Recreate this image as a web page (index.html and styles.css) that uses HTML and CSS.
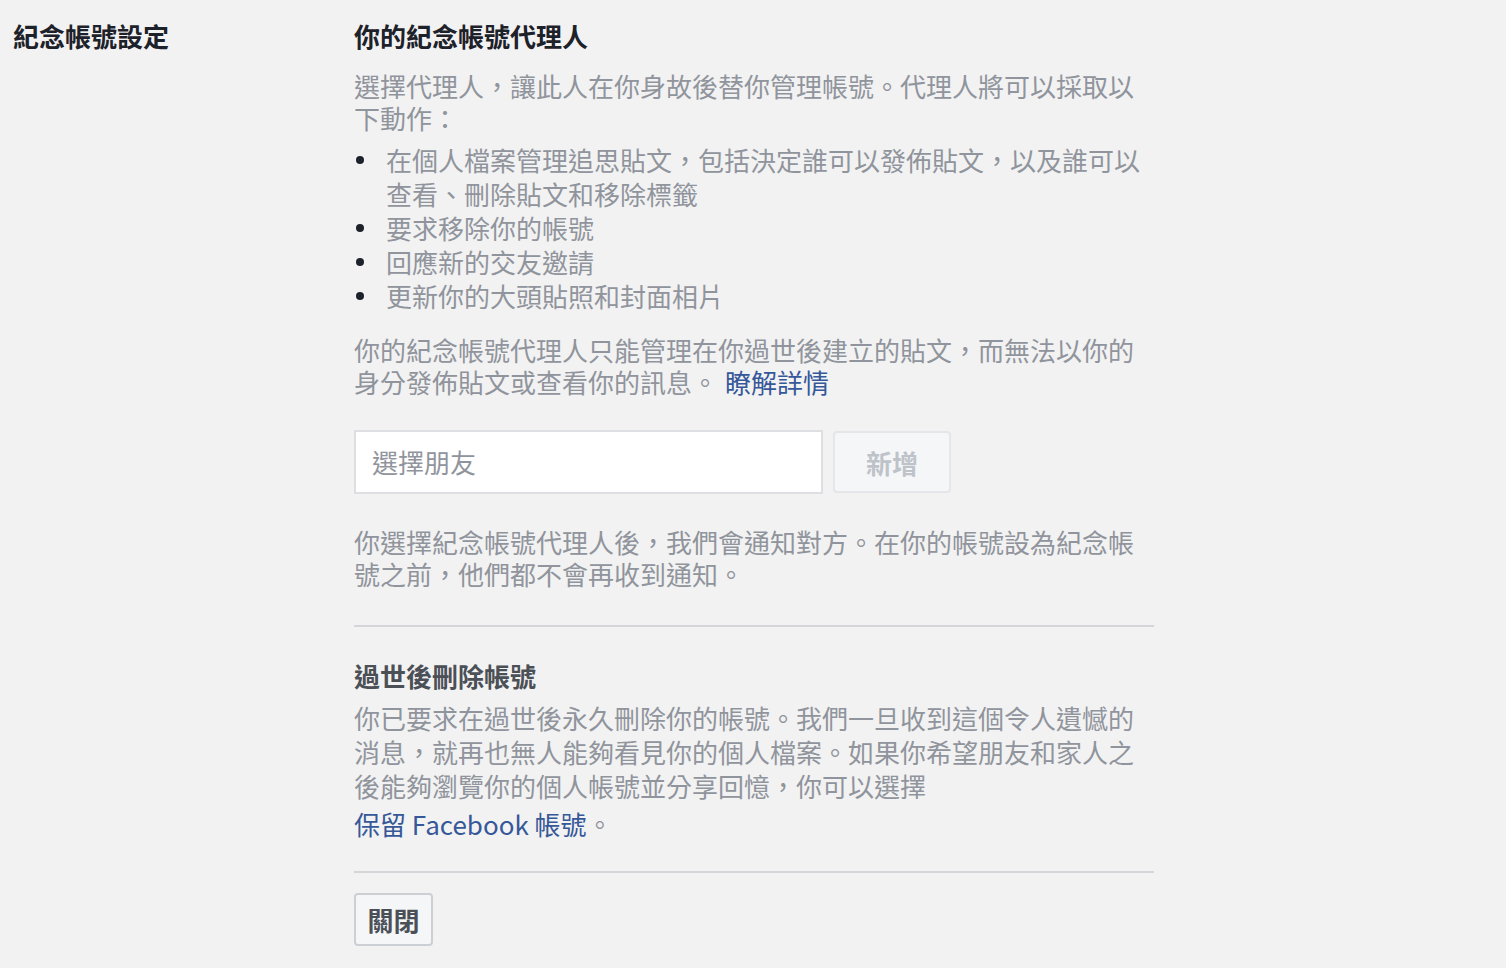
FILE: index.html
```html
<!DOCTYPE html>
<html lang="zh-Hant">
<head>
<meta charset="utf-8">
<title>紀念帳號設定</title>
<link rel="stylesheet" href="styles.css">
</head>
<body>
<div class="page">
  <div class="label-col">
    <h2 class="section-label">紀念帳號設定</h2>
  </div>
  <div class="content-col">
    <h3 class="heading">你的紀念帳號代理人</h3>
    <p class="text p-intro">選擇代理人，讓此人在你身故後替你管理帳號。代理人將可以採取以下動作：</p>
    <ul class="bullets">
      <li>在個人檔案管理追思貼文，包括決定誰可以發佈貼文，以及誰可以查看、刪除貼文和移除標籤</li>
      <li>要求移除你的帳號</li>
      <li>回應新的交友邀請</li>
      <li>更新你的大頭貼照和封面相片</li>
    </ul>
    <p class="text p-limit">你的紀念帳號代理人只能管理在你過世後建立的貼文，而無法以你的身分發佈貼文或查看你的訊息。<a class="link link-more" href="#">瞭解詳情</a></p>
    <div class="picker">
      <div class="friend-input">選擇朋友</div>
      <button class="btn btn-add" type="button">新增</button>
    </div>
    <p class="text p-notify">你選擇紀念帳號代理人後，我們會通知對方。在你的帳號設為紀念帳號之前，他們都不會再收到通知。</p>
    <hr class="divider divider-1">
    <h3 class="heading heading-2">過世後刪除帳號</h3>
    <p class="text p-delete">你已要求在過世後永久刪除你的帳號。我們一旦收到這個令人遺憾的消息，就再也無人能夠看見你的個人檔案。如果你希望朋友和家人之後能夠瀏覽你的個人帳號並分享回憶，你可以選擇</p>
    <div class="text keep-line"><a class="link" href="#">保留 Facebook 帳號</a>。</div>
    <hr class="divider divider-2">
    <button class="btn btn-close" type="button">關閉</button>
  </div>
</div>
</body>
</html>
```

FILE: styles.css
```css
html, body {
  margin: 0;
  padding: 0;
  background: #f2f2f2;
}
body {
  font-family: "Noto Sans CJK TC", "Noto Sans", "Liberation Sans", sans-serif;
  font-size: 26px;
  color: #90949c;
}
.page {
  display: flex;
  padding-top: 20px;
}
.label-col {
  width: 341px;
  padding-left: 13px;
  flex: none;
}
.section-label {
  margin: 0;
  font-size: 26px;
  line-height: 32px;
  font-weight: 700;
  color: #1d2129;
}
.content-col {
  width: 800px;
  flex: none;
}
.heading {
  margin: 0;
  font-size: 26px;
  line-height: 32px;
  font-weight: 700;
  color: #1d2129;
}
.heading-2 {
  color: #4b4f56;
  margin-top: 33px;
}
.text {
  margin: 0;
  line-height: 32px;
  color: #90949c;
}
.p-intro {
  margin-top: 18px;
}
.bullets {
  list-style: none;
  margin: 9px 0 0;
  padding: 0;
  line-height: 34px;
}
.bullets li {
  position: relative;
  padding-left: 32px;
}
.bullets li::before {
  content: "";
  position: absolute;
  left: 2px;
  top: 13px;
  width: 8px;
  height: 8px;
  border-radius: 50%;
  background: #1d2129;
}
.p-limit {
  margin-top: 21px;
}
.link {
  color: #365899;
  text-decoration: none;
}
.link-more {
  margin-left: 7px;
}
.picker {
  display: flex;
  gap: 10px;
  margin-top: 32px;
  align-items: center;
}
.friend-input {
  box-sizing: border-box;
  width: 469px;
  height: 64px;
  border: 2px solid #dddfe2;
  background: #ffffff;
  padding-left: 16px;
  line-height: 60px;
  color: #90949c;
}
.btn {
  font-family: "Noto Sans CJK TC", "Noto Sans", "Liberation Sans", sans-serif;
  font-size: 26px;
  font-weight: 700;
  box-sizing: border-box;
  border-radius: 4px;
  background: #f5f6f7;
  padding: 0;
}
.btn-add {
  width: 118px;
  height: 62px;
  border: 2px solid #e4e6e9;
  color: #bec3c9;
}
.p-notify {
  margin-top: 32px;
}
.divider {
  border: 0;
  height: 2px;
  background: #d3d5d8;
  margin: 0;
}
.divider-1 {
  margin-top: 35px;
}
.p-delete {
  margin-top: 9px;
  line-height: 34px;
}
.keep-line {
  margin-top: 4px;
  line-height: 34px;
}
.divider-2 {
  margin-top: 30px;
}
.btn-close {
  margin-top: 20px;
  width: 79px;
  height: 53px;
  border: 2px solid #ccd0d5;
  color: #4b4f56;
}
```
